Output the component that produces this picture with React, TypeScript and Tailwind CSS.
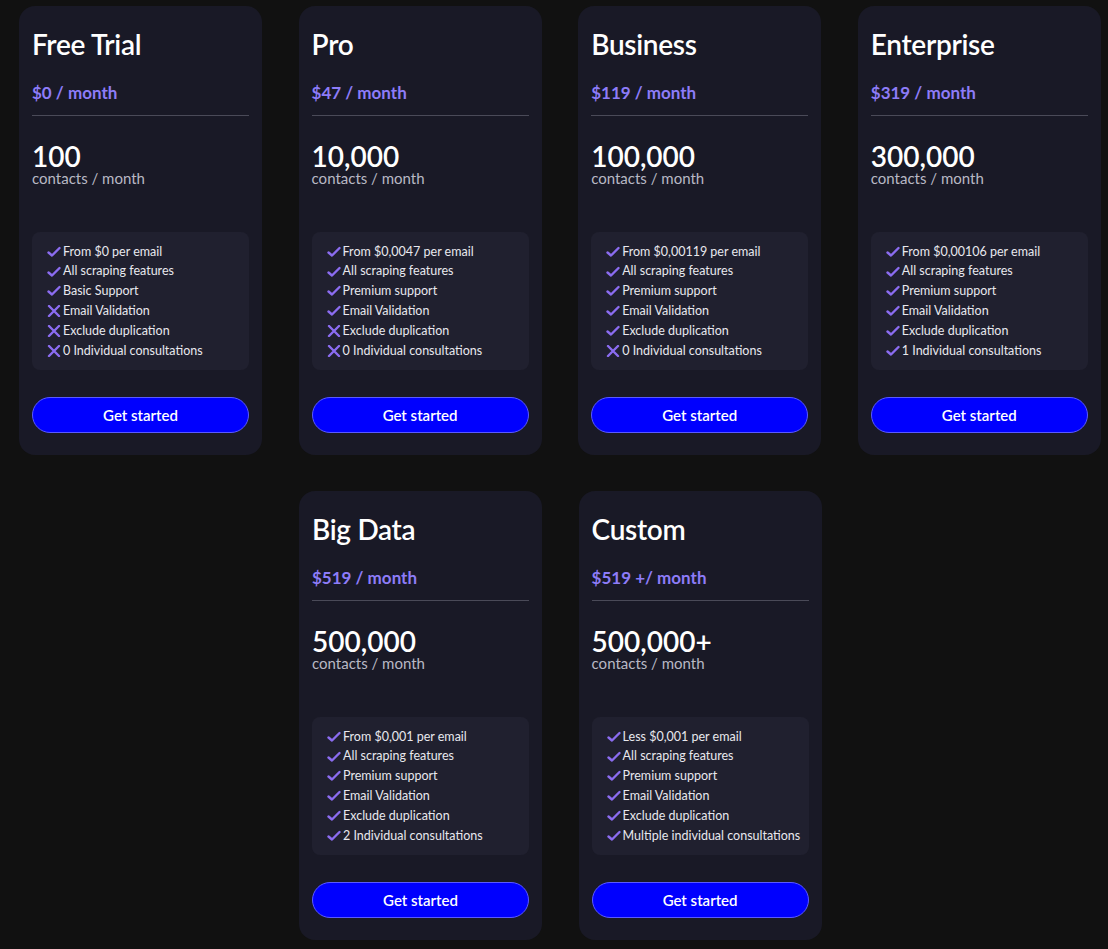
import React from "react";

type F = [boolean, string];
const plans: { name: string; price: string; n: string; f: F[] }[] = [
  { name: "Free Trial", price: "$0 / month", n: "100", f: [[true, "From $0 per email"], [true, "All scraping features"], [true, "Basic Support"], [false, "Email Validation"], [false, "Exclude duplication"], [false, "0 Individual consultations"]] },
  { name: "Pro", price: "$47 / month", n: "10,000", f: [[true, "From $0,0047 per email"], [true, "All scraping features"], [true, "Premium support"], [true, "Email Validation"], [false, "Exclude duplication"], [false, "0 Individual consultations"]] },
  { name: "Business", price: "$119 / month", n: "100,000", f: [[true, "From $0,00119 per email"], [true, "All scraping features"], [true, "Premium support"], [true, "Email Validation"], [true, "Exclude duplication"], [false, "0 Individual consultations"]] },
  { name: "Enterprise", price: "$319 / month", n: "300,000", f: [[true, "From $0,00106 per email"], [true, "All scraping features"], [true, "Premium support"], [true, "Email Validation"], [true, "Exclude duplication"], [true, "1 Individual consultations"]] },
  { name: "Big Data", price: "$519 / month", n: "500,000", f: [[true, "From $0,001 per email"], [true, "All scraping features"], [true, "Premium support"], [true, "Email Validation"], [true, "Exclude duplication"], [true, "2 Individual consultations"]] },
  { name: "Custom", price: "$519 +/ month", n: "500,000+", f: [[true, "Less $0,001 per email"], [true, "All scraping features"], [true, "Premium support"], [true, "Email Validation"], [true, "Exclude duplication"], [true, "Multiple individual consultations"]] },
];

const Check = () => (
  <svg width="14" height="12" viewBox="0 0 14 12" className="shrink-0 mr-[2px]">
    <path d="M1.5 6.5 L5 9.5 L12.5 2" stroke="#8b6cf0" strokeWidth="2.4" fill="none" strokeLinecap="round" strokeLinejoin="round" />
  </svg>
);
const Cross = () => (
  <svg width="14" height="12" viewBox="0 0 14 12" className="shrink-0 mr-[2px]">
    <path d="M2 1 L12 11 M12 1 L2 11" stroke="#8b6cf0" strokeWidth="2.4" fill="none" strokeLinecap="round" />
  </svg>
);

function Card({ p }: { p: (typeof plans)[0] }) {
  return (
    <div className="w-[243px] h-[449px] rounded-[16px] bg-[#191926] px-[13px] pt-[24px]">
      <div className="text-[28px] leading-[28px] font-semibold text-white tracking-[-0.3px]">{p.name}</div>
      <div className="mt-[25px] text-[17px] leading-[20px] font-bold text-[#8d7cf8]">{p.price}</div>
      <div className="mt-[12px] h-px bg-[#4a4a58]" />
      <div className="mt-[26px] text-[28px] leading-[28px] font-semibold text-white">{p.n}</div>
      <div className="text-[15px] leading-[16px] text-[#b8b8c4]">contacts / month</div>
      <div className="mt-[46px] h-[138px] rounded-[8px] bg-[#20202f] pl-[15px] pt-[10px]">
        {p.f.map(([ok, t]) => (
          <div key={t} className="flex items-center h-[19.8px] text-[12.5px] text-[#e8e8ee]">
            {ok ? <Check /> : <Cross />}
            {t}
          </div>
        ))}
      </div>
      <button className="mt-[27px] w-full h-[36px] rounded-full bg-[#0000fe] border border-[#5a5aff] text-white text-[15px] font-semibold">
        Get started
      </button>
    </div>
  );
}

export default function App() {
  return (
    <div className="min-h-[949px] bg-[#111111] pt-[6px] pl-[19px]" style={{ fontFamily: "Lato, 'Noto Sans', sans-serif" }}>
      <div className="flex gap-[36.6px]">
        {plans.slice(0, 4).map((p) => <Card key={p.name} p={p} />)}
      </div>
      <div className="flex gap-[36.6px] mt-[36px] pl-[280px]">
        {plans.slice(4).map((p) => <Card key={p.name} p={p} />)}
      </div>
    </div>
  );
}
